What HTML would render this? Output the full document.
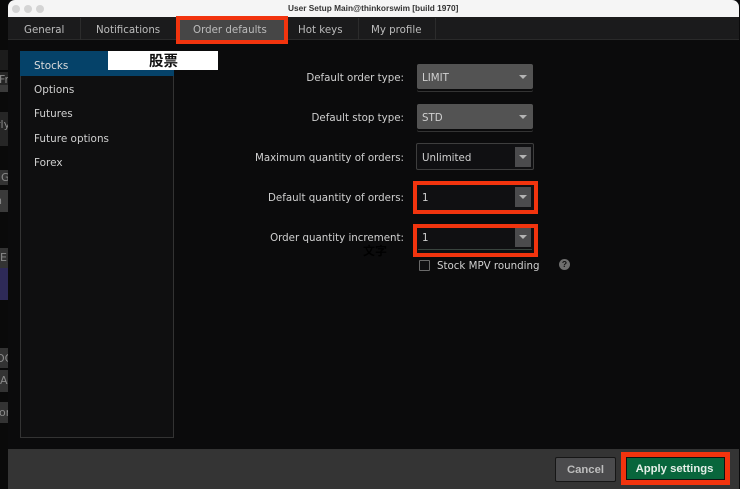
<!DOCTYPE html>
<html lang="en">
<head>
<meta charset="utf-8">
<title>User Setup</title>
<style>
html,body{margin:0;padding:0;background:#0b0b0c}
#p{position:relative;width:740px;height:489px;overflow:hidden;background:#0b0b0c;font-family:"DejaVu Sans","Liberation Sans",sans-serif;font-size:10.25px;color:#d0d0d0}
#p div{position:absolute;box-sizing:border-box}
#p span{position:absolute;white-space:nowrap;line-height:14px}
.r{text-align:right;right:336px}
.box{border:4px solid #f2340e}
.sel{background:#535353;box-shadow:0 2px 0 #0b0b0c,0 3px 0 #333}
.in{background:#101012;border:1px solid #3e3e3e;border-radius:2px}
.in2{background:#101012}
.btn{background:#4b4b4d}
.tri{width:0;height:0;border-left:4px solid transparent;border-right:4px solid transparent;border-top:4px solid #b4b4b4}
.sep{width:1px;background:#2c2c2c;top:18px;height:22px}
.tab{color:#bcbcbc;top:23px}
.st{color:#8a8a8a;font-size:11px}
</style>
</head>
<body>
<div id="p">
  <!-- background app strip -->
  <div style="left:0;top:0;width:8px;height:489px;background:#0a0a0a;overflow:hidden">
    <div style="left:0;top:50px;width:8px;height:20px;background:#1c1c1c"></div>
    <div style="left:0;top:72px;width:8px;height:13px;background:#242424"></div>
    <div style="left:0;top:85px;width:8px;height:7px;background:#3a3a3a"></div>
    <div style="left:0;top:112px;width:8px;height:34px;background:#262626"></div>
    <div style="left:0;top:170px;width:8px;height:15px;background:#333"></div>
    <div style="left:0;top:190px;width:8px;height:22px;background:#3a3a3a"></div>
    <div style="left:0;top:248px;width:8px;height:20px;background:#333"></div>
    <div style="left:0;top:268px;width:8px;height:32px;background:#2e2a58"></div>
    <div style="left:0;top:348px;width:8px;height:20px;background:#333"></div>
    <div style="left:0;top:370px;width:8px;height:22px;background:#333"></div>
    <div style="left:0;top:402px;width:8px;height:21px;background:#333"></div>
    <span class="st" style="left:-1px;top:73px">Fre</span>
    <span class="st" style="left:-4px;top:118px">rly</span>
    <span class="st" style="left:1px;top:171px">G</span>
    <span class="st" style="left:-5px;top:194px">n</span>
    <span class="st" style="left:0;top:251px">E</span>
    <span class="st" style="left:-4px;top:352px">OC</span>
    <span class="st" style="left:0;top:374px">AI</span>
    <span class="st" style="left:-1px;top:406px">or</span>
  </div>

  <!-- window -->
  <div style="left:8px;top:0;width:731px;height:489px;background:#0b0b0c;border-radius:7px 7px 0 0;overflow:hidden"></div>
  <!-- title bar -->
  <div style="left:8px;top:0;width:731px;height:17px;background:#f5f5f5;border-radius:7px 7px 0 0"></div>
  <div style="left:12px;top:5px;width:8px;height:8px;border-radius:50%;background:#d4d4d4"></div>
  <div style="left:24px;top:5px;width:8px;height:8px;border-radius:50%;background:#d4d4d4"></div>
  <div style="left:36px;top:5px;width:8px;height:8px;border-radius:50%;background:#d4d4d4"></div>
  <span style="left:288px;top:1px;font:bold 8.3px/14px 'Liberation Sans',sans-serif;color:#333">User Setup Main@thinkorswim [build 1970]</span>

  <!-- tabs -->
  <div style="left:8px;top:17px;width:731px;height:23px;background:#1b1b1c;border-bottom:1px solid #2a2a2a"></div>
  <div class="sep" style="left:80px"></div>
  <div class="sep" style="left:358px"></div>
  <div class="sep" style="left:435px"></div>
  <div style="left:176px;top:16px;width:112px;height:28px;background:#464646;border:4px solid #f2340e"></div>
  <span class="tab" style="left:24px">General</span>
  <span class="tab" style="left:96px">Notifications</span>
  <span class="tab" style="left:193px">Order defaults</span>
  <span class="tab" style="left:298px">Hot keys</span>
  <span class="tab" style="left:371px">My profile</span>

  <!-- sidebar -->
  <div style="left:20px;top:51px;width:154px;height:387px;background:#0f0f10;border:1px solid #333"></div>
  <div style="left:20px;top:51px;width:154px;height:25px;background:#054269"></div>
  <div style="left:108px;top:51px;width:110px;height:19px;background:#fff"></div>
  <span style="left:149px;top:54px;font:bold 14.5px/14px 'Noto Sans CJK SC',sans-serif;color:#111">股票</span>
  <span style="left:34px;top:59px;font-size:10.45px;color:#dcdcdc">Stocks</span>
  <span style="left:34px;top:83px;font-size:10.45px">Options</span>
  <span style="left:34px;top:107px;font-size:10.45px">Futures</span>
  <span style="left:34px;top:132px;font-size:10.45px">Future options</span>
  <span style="left:34px;top:156px;font-size:10.45px">Forex</span>

  <!-- form labels -->
  <span class="r" style="top:71px">Default order type:</span>
  <span class="r" style="top:111px">Default stop type:</span>
  <span class="r" style="top:151px">Maximum quantity of orders:</span>
  <span class="r" style="top:191px">Default quantity of orders:</span>
  <span class="r" style="top:231px">Order quantity increment:</span>
  <span style="left:363px;top:245px;font:bold 12px/12px 'Noto Sans CJK SC',sans-serif;color:#000">文字</span>

  <!-- controls -->
  <div class="sel" style="left:417px;top:64px;width:116px;height:25px;border-radius:2px"></div>
  <span style="left:422px;top:71px">LIMIT</span>
  <div class="tri" style="left:519px;top:75px"></div>

  <div class="sel" style="left:417px;top:104px;width:116px;height:25px;border-radius:2px"></div>
  <span style="left:422px;top:111px">STD</span>
  <div class="tri" style="left:519px;top:115px"></div>

  <div class="in" style="left:416px;top:143px;width:118px;height:27px"></div>
  <div class="btn" style="left:515px;top:147px;width:16px;height:20px"></div>
  <span style="left:422px;top:151px">Unlimited</span>
  <div class="tri" style="left:519px;top:155px"></div>

  <div class="in2" style="left:416px;top:184px;width:118px;height:27px"></div>
  <div class="btn" style="left:515px;top:187px;width:16px;height:20px"></div>
  <div class="box" style="left:413px;top:181px;width:125px;height:33px"></div>
  <span style="left:422px;top:191px">1</span>
  <div class="tri" style="left:519px;top:195px"></div>

  <div class="in2" style="left:416px;top:227px;width:118px;height:27px"></div>
  <div style="left:418px;top:249px;width:114px;height:1px;background:#39443e"></div>
  <div class="btn" style="left:515px;top:228px;width:16px;height:19px"></div>
  <div class="box" style="left:413px;top:224px;width:125px;height:33px"></div>
  <span style="left:422px;top:231px">1</span>
  <div class="tri" style="left:519px;top:235px"></div>

  <div style="left:419px;top:260px;width:11px;height:11px;border:1px solid #6a6a6a;border-radius:1px;background:#101012"></div>
  <span style="left:437px;top:259px">Stock MPV rounding</span>
  <div style="left:559px;top:259px;width:11px;height:11px;border-radius:50%;background:#6e6e6e"></div>
  <span style="left:559px;top:258px;width:11px;text-align:center;font:bold 8.5px/13px 'Liberation Sans',sans-serif;color:#111">?</span>

  <!-- footer -->
  <div style="left:8px;top:449px;width:731px;height:40px;background:#343434"></div>
  <div style="left:555px;top:457px;width:61px;height:25px;background:#4b4b4d;border:1px solid #161616;border-radius:2px"></div>
  <span style="left:555px;top:463px;width:61px;text-align:center;font:bold 11.3px/14px 'Liberation Sans',sans-serif;color:#bdbdbd">Cancel</span>
  <div style="left:621px;top:452px;width:109px;height:33px;background:#08663c;border:5px solid #f2340e;box-shadow:inset 0 0 0 1px #111"></div>
  <span style="left:621px;top:462px;width:107px;text-align:center;font:bold 11.3px/14px 'Liberation Sans',sans-serif;color:#e4efe8">Apply settings</span>
</div>
</body>
</html>
